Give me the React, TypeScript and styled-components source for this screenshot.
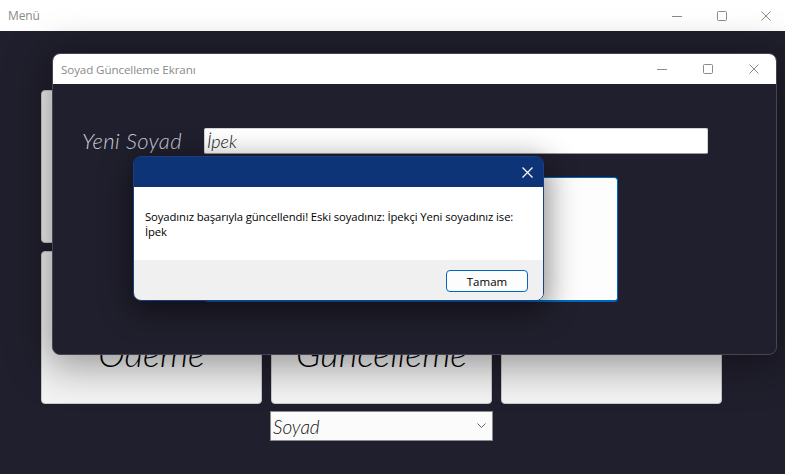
import React from "react";
import styled, { createGlobalStyle } from "styled-components";

const GlobalStyle = createGlobalStyle`
  html, body { margin: 0; padding: 0; background: #201f2d; overflow: hidden; }
  * { box-sizing: border-box; }
`;

const Screen = styled.div`
  position: relative;
  width: 785px;
  height: 474px;
  display: flex;
  flex-direction: column;
  background: #201f2d;
  font-family: "Open Sans", "Noto Sans", sans-serif;
  overflow: hidden;
`;

const TitleBar = styled.div<{ $h: number; $pl: number; $pr: number }>`
  height: ${(p) => p.$h}px;
  flex: none;
  background: #ffffff;
  display: flex;
  align-items: center;
  justify-content: space-between;
  padding: 0 ${(p) => p.$pr}px 0 ${(p) => p.$pl}px;
`;

const TitleText = styled.span<{ $size: number }>`
  font-family: "Open Sans", "Noto Sans", sans-serif;
  font-size: ${(p) => p.$size}px;
  color: #8a8a8a;
  letter-spacing: -0.1px;
`;

const Controls = styled.div<{ $gap: number }>`
  display: flex;
  align-items: center;
  gap: ${(p) => p.$gap}px;
`;

const Glyph = styled.svg`
  width: 10px;
  height: 10px;
  display: block;
  stroke: #8a8a8a;
  stroke-width: 1;
  fill: none;
`;

const Desk = styled.div`
  flex: 1;
  padding: 59px 0 0 41px;
  display: flex;
  flex-direction: column;
`;

const CardGrid = styled.div`
  display: grid;
  grid-template-columns: repeat(3, 221px);
  grid-auto-rows: 153px;
  column-gap: 9px;
  row-gap: 8px;
`;

const Card = styled.div`
  background: #f4f4f4;
  border: 1px solid #c9c9c9;
  border-radius: 4px;
  display: flex;
  align-items: center;
  justify-content: center;
  text-align: center;
  font-family: "Lato", "Open Sans", sans-serif;
  font-style: italic;
  font-weight: 300;
  font-size: 36px;
  line-height: 44px;
  color: #000;
  padding-top: 50px;
`;

const SelectRow = styled.div`
  margin: 7px 0 0 229px;
`;

const SelectBox = styled.div`
  width: 223px;
  height: 30px;
  background: #fbfbfb;
  border: 1px solid #8a8a8a;
  display: flex;
  align-items: center;
  justify-content: space-between;
  padding: 0 6px 0 2px;
  font-family: "Lato", "Open Sans", sans-serif;
  font-style: italic;
  font-weight: 300;
  font-size: 19px;
  color: #111;
`;

const Chevron = styled.svg`
  width: 9px;
  height: 6px;
  stroke: #666;
  stroke-width: 1;
  fill: none;
`;

const InnerWindow = styled.div`
  position: absolute;
  left: 52px;
  top: 53px;
  width: 725px;
  height: 302px;
  border: 1px solid #45444f;
  border-radius: 8px;
  overflow: hidden;
  background: #201f2d;
  display: flex;
  flex-direction: column;
  box-shadow: 0 6px 40px 6px rgba(0, 0, 0, 0.38);
`;

const InnerBody = styled.div`
  flex: 1;
  padding: 43px 0 0 29px;
  display: flex;
  flex-direction: column;
`;

const FieldRow = styled.div`
  display: grid;
  grid-template-columns: 122px 504px;
  align-items: center;
`;

const Label = styled.span`
  font-family: "Lato", "Open Sans", sans-serif;
  font-style: italic;
  font-weight: 300;
  font-size: 22px;
  color: #c9ccda;
  letter-spacing: 0.4px;
`;

const TextInput = styled.div`
  height: 26px;
  background: #ffffff;
  border: 1px solid #d4d4d4;
  border-bottom-color: #9a9a9a;
  border-radius: 2px;
  display: flex;
  align-items: center;
  padding-left: 2px;
  font-family: "Lato", "Open Sans", sans-serif;
  font-style: italic;
  font-weight: 300;
  font-size: 18px;
  color: #111;
`;

const ActionButton = styled.div`
  margin: 23px 0 0 122px;
  width: 414px;
  height: 125px;
  background: #fdfdfd;
  border: 1px solid #0067c0;
  border-bottom-width: 2px;
  border-radius: 4px;
`;

const Dialog = styled.div`
  position: absolute;
  left: 133px;
  top: 156px;
  width: 411px;
  height: 145px;
  border-radius: 8px;
  overflow: hidden;
  display: flex;
  flex-direction: column;
  border: 1px solid #1a3f86;
  box-shadow: 0 8px 30px 4px rgba(0, 0, 0, 0.45);
`;

const DialogHeader = styled.div`
  height: 30px;
  flex: none;
  background: #0c3477;
  display: flex;
  align-items: center;
  justify-content: flex-end;
  padding-right: 10px;
`;

const CloseGlyph = styled.svg`
  width: 11px;
  height: 11px;
  stroke: #ffffff;
  stroke-width: 1.2;
  fill: none;
`;

const DialogBody = styled.div`
  height: 73px;
  background: #ffffff;
  padding: 22px 11px 0 11px;
  font-family: "Open Sans", "Noto Sans", sans-serif;
  font-size: 11.3px;
  line-height: 15px;
  color: #000;
  letter-spacing: -0.1px;
`;

const DialogFooter = styled.div`
  flex: 1;
  background: #f0f0f0;
  display: flex;
  justify-content: flex-end;
  align-items: flex-start;
  padding: 10px 15px 0 0;
`;

const OkButton = styled.div`
  width: 82px;
  height: 22px;
  border: 1px solid #0067c0;
  border-radius: 4px;
  background: #fdfdfd;
  display: flex;
  align-items: center;
  justify-content: center;
  font-family: "Open Sans", "Noto Sans", sans-serif;
  font-size: 11.5px;
  color: #000;
`;

const WinControls: React.FC<{ gap: number }> = ({ gap }) => (
  <Controls $gap={gap}>
    <Glyph viewBox="0 0 10 10">
      <path d="M0 5.5 H10" />
    </Glyph>
    <Glyph viewBox="0 0 10 10">
      <rect x="0.5" y="0.5" width="9" height="9" rx="1" />
    </Glyph>
    <Glyph viewBox="0 0 10 10">
      <path d="M0.5 0.5 L9.5 9.5 M9.5 0.5 L0.5 9.5" />
    </Glyph>
  </Controls>
);

const cards = ["", "", "", "Ödeme", "Güncelleme", ""];

export default function App() {
  return (
    <>
      <GlobalStyle />
      <Screen>
        <TitleBar $h={31} $pl={8} $pr={14}>
          <TitleText $size={12}>Menü</TitleText>
          <WinControls gap={34.5} />
        </TitleBar>
        <Desk>
          <CardGrid>
            {cards.map((c, i) => (
              <Card key={i}>{c}</Card>
            ))}
          </CardGrid>
          <SelectRow>
            <SelectBox>
              <span>Soyad</span>
              <Chevron viewBox="0 0 9 6">
                <path d="M0.5 0.5 L4.5 4.5 L8.5 0.5" />
              </Chevron>
            </SelectBox>
          </SelectRow>
        </Desk>

        <InnerWindow>
          <TitleBar $h={30} $pl={8} $pr={17}>
            <TitleText $size={11.6}>Soyad Güncelleme Ekranı</TitleText>
            <WinControls gap={36} />
          </TitleBar>
          <InnerBody>
            <FieldRow>
              <Label>Yeni Soyad</Label>
              <TextInput>İpek</TextInput>
            </FieldRow>
            <ActionButton />
          </InnerBody>
        </InnerWindow>

        <Dialog>
          <DialogHeader>
            <CloseGlyph viewBox="0 0 11 11">
              <path d="M0.5 0.5 L10.5 10.5 M10.5 0.5 L0.5 10.5" />
            </CloseGlyph>
          </DialogHeader>
          <DialogBody>
            Soyadınız başarıyla güncellendi! Eski soyadınız: İpekçi Yeni soyadınız ise:
            <br />
            İpek
          </DialogBody>
          <DialogFooter>
            <OkButton>Tamam</OkButton>
          </DialogFooter>
        </Dialog>
      </Screen>
    </>
  );
}
